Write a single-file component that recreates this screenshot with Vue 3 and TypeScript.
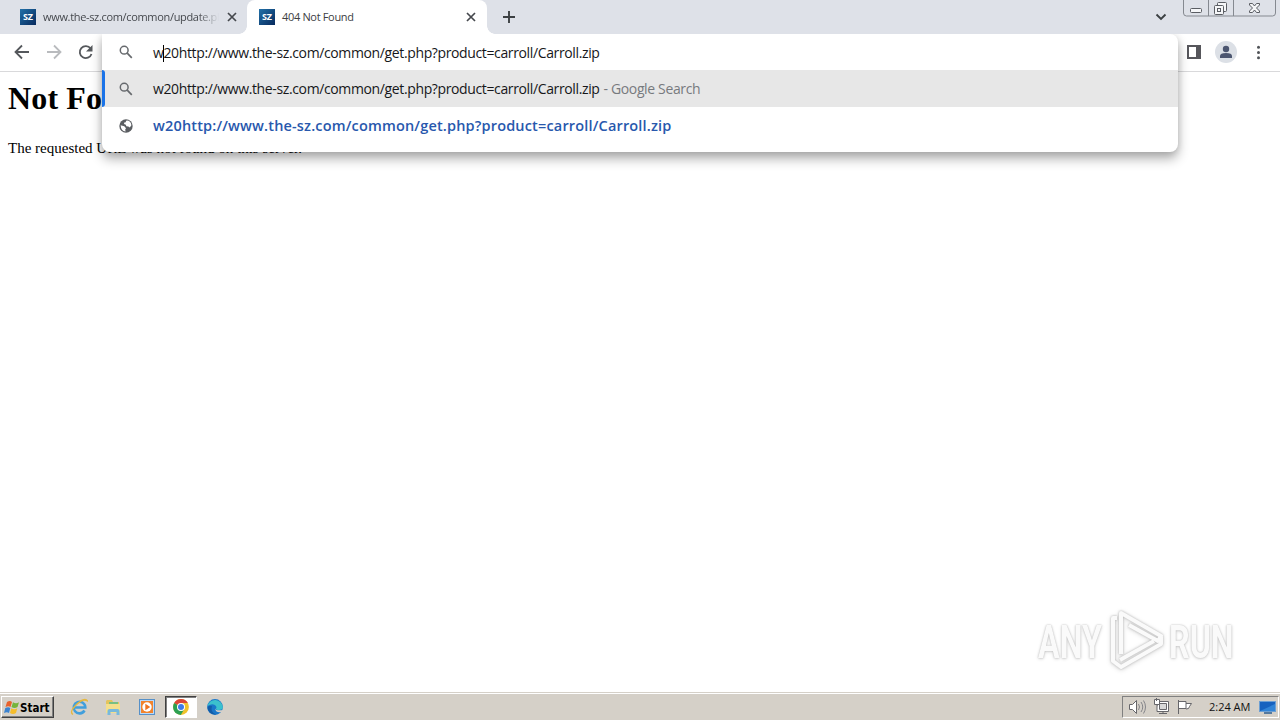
<script setup lang="ts">
const query: string = 'w20http://www.the-sz.com/common/get.php?product=carroll/Carroll.zip'
</script>

<template>
  <div class="screen">
    <header class="tabs">
      <div class="tab idle">
        <span class="fav">SZ</span>
        <span class="title fade">www.the-sz.com/common/update.ph</span>
        <svg class="close" width="10" height="10" viewBox="0 0 10 10"><path d="M1 1l8 8M9 1L1 9" stroke="#45484d" stroke-width="1.7" /></svg>
      </div>
      <div class="tab active">
        <span class="fav">SZ</span>
        <span class="title">404 Not Found</span>
        <svg class="close" width="10" height="10" viewBox="0 0 10 10"><path d="M1 1l8 8M9 1L1 9" stroke="#45484d" stroke-width="1.7" /></svg>
      </div>
      <svg class="plus" width="12" height="12" viewBox="0 0 12 12"><path d="M6 0v12M0 6h12" stroke="#3c4043" stroke-width="1.9" /></svg>
      <svg class="chev" width="12" height="8" viewBox="0 0 12 8"><path d="M1.5 1.5L6 6l4.5-4.500" fill="none" stroke="#3c4043" stroke-width="1.9" /></svg>
      <svg class="winctl" width="94" height="18" viewBox="0 0 94 18">
        <path d="M.5 0v13q0 3 3 3h86q3 0 3-3V0M25.500 0v16M50.500 0v16" fill="none" stroke="#858990" />
        <g fill="#f5f6f8" stroke="#5a5d63">
          <rect x="7.500" y="8.500" width="11" height="4" rx="1" />
          <rect x="34.500" y="2.500" width="9" height="9" rx="1" />
          <rect x="31.500" y="5.500" width="9" height="9" rx="1" />
          <rect x="34.500" y="8.500" width="3" height="3" />
          <path d="M66.500 3.500h3l2 2.500 2-2.500h3v1.500l-3 3 3 3v1.500h-3l-2-2.500-2 2.500h-3v-1.500l3-3-3-3z" />
        </g>
      </svg>
    </header>

    <div class="toolbar">
      <svg class="nav" width="100" height="37" viewBox="0 0 100 37" fill="none" stroke-width="1.8">
        <path d="M29 18H16M22 11.500L15.500 18l6.500 6.500" stroke="#55585c" />
        <path d="M47 18h13M54 11.500l6.500 6.500-6.500 6.500" stroke="#b9bbbe" />
        <path d="M90.600 14.500A6 6 0 1 0 91.500 20" stroke="#55585c" />
        <path d="M92.500 11v6.500H86z" fill="#55585c" />
      </svg>
      <svg class="actions" width="100" height="37" viewBox="0 0 100 37">
        <path d="M7 11h14v14H7zM9 13v10h7V13z" fill="#56565b" fill-rule="evenodd" />
        <circle cx="46" cy="18" r="11" fill="#dce0e6" />
        <circle cx="46" cy="15" r="3.200" fill="#4c5670" />
        <path d="M40 24v-2q0-3 6-3t6 3v2z" fill="#4c5670" />
        <g fill="#505357"><circle cx="78.500" cy="13.300" r="1.500" /><circle cx="78.500" cy="18.500" r="1.500" /><circle cx="78.500" cy="23.700" r="1.500" /></g>
      </svg>
    </div>

    <main class="page">
      <h1>Not Found</h1>
      <p>The requested URL was not found on this server.</p>
    </main>

    <section class="omnibox">
      <div class="row input">
        <svg class="ico" width="14" height="14" viewBox="0 0 14 14"><circle cx="5.200" cy="5.200" r="3.900" fill="none" stroke="#66696d" stroke-width="1.500" /><path d="M8.200 8.200l4.600 4.600" stroke="#66696d" stroke-width="1.700" /></svg>
        <span class="url">{{ query }}</span>
        <i class="caret"></i>
      </div>
      <div class="row selected">
        <svg class="ico" width="14" height="14" viewBox="0 0 14 14"><circle cx="5.200" cy="5.200" r="3.900" fill="none" stroke="#66696d" stroke-width="1.500" /><path d="M8.200 8.200l4.600 4.600" stroke="#66696d" stroke-width="1.700" /></svg>
        <span class="url">{{ query }}</span><span class="hint">- Google Search</span>
      </div>
      <div class="row">
        <svg class="ico" width="14" height="14" viewBox="0 0 14 14"><circle cx="7" cy="7" r="6.700" fill="#5b5e62" /><path d="M1.600 6.200l3.700 1 1.700 2-.8 1.200.4 2Q2 12 1.600 6.200zM7 1.700l2-.1q3 1 3.400 4.600l-1.600 2.300-1.500-1-2-.3-.4-1.500L5 5l.3-1.500 1.500-.3z" fill="#fff" /></svg>
        <span class="match">{{ query }}</span>
      </div>
    </section>

    <div class="watermark">
      <span class="wm any">ANY</span>
      <svg class="play" width="60" height="64" viewBox="0 0 60 64" fill="none" stroke="#fafafa" stroke-width="4" stroke-linejoin="round">
        <path d="M15 46V5l40 23-3 5-29-16" />
        <path d="M11 10H7v43l8 6 40-23v-7" />
        <path d="M14 52l7-4 27-15" />
      </svg>
      <span class="wm run">RUN</span>
    </div>

    <footer class="taskbar">
      <div class="start">
        <svg width="16" height="15" viewBox="0 0 16 15">
          <path d="M3 2q3-2 5 0L6.500 7q-2-1.500-5 0z" fill="#e8622c" />
          <path d="M9 2.300q3 1.700 6 0L13.500 7q-3 1.800-6 0z" fill="#76b43c" />
          <path d="M1.300 8q3-1.500 5 0L5 13q-2-1.500-5 0z" fill="#3b83d0" />
          <path d="M7.300 8.300q3 1.700 6 0L12 13q-3 1.800-6 0z" fill="#f5bd2c" />
        </svg>
        <b>Start</b>
      </div>
      <div class="app">
        <svg width="18" height="18" viewBox="0 0 18 18"><path d="M14.500 12.500A5.800 5.800 0 1 1 15.300 9.500H5" fill="none" stroke="#419fdc" stroke-width="2.600" /><path d="M3 16.500Q-1 14 6 7T17.500 3Q16 0 10 3" fill="none" stroke="#e6b83f" stroke-width="1.300" /></svg>
      </div>
      <div class="app">
        <svg width="18" height="18" viewBox="0 0 18 18"><path d="M2 3l1-1h5l1 2h6v11H2z" fill="#e4c45d" /><path d="M5 4h9v3H5z" fill="#78bf82" /><path d="M2 6h14v9H2z" fill="#f4df8c" /><path d="M3.500 17v-4q0-2 2-2h8q2 0 2 2v4h-3v-3h-6v3z" fill="#78b9dc" /></svg>
      </div>
      <div class="app">
        <svg width="18" height="18" viewBox="0 0 18 18"><rect x="1.500" y="1.500" width="15" height="15" fill="#b9dafa" stroke="#5690c8" /><rect x="3" y="3" width="12" height="12" fill="#f1832c" /><circle cx="9" cy="9" r="4.700" fill="#fff" /><path d="M7.300 5.800l5 3.200-5 3.200z" fill="#ee7420" /></svg>
      </div>
      <div class="app pressed">
        <svg width="18" height="18" viewBox="0 0 18 18"><circle cx="9" cy="9" r="7.900" fill="#f0c22b" /><path d="M9 9L2.100 5.100A7.900 7.900 0 0 1 15.900 5.100H9z" fill="#dc4638" /><path d="M9 9L2.100 5.100A7.900 7.900 0 0 0 8.800 16.900L12.300 11z" fill="#2ca052" /><circle cx="9" cy="9" r="4" fill="#fff" /><circle cx="9" cy="9" r="3" fill="#3f7be8" /></svg>
      </div>
      <div class="app">
        <svg width="18" height="18" viewBox="0 0 18 18"><circle cx="9" cy="9" r="7.900" fill="#1976c9" /><path d="M1.400 8A7.900 7.900 0 0 1 16.900 9q0 3-3.900 3-3 0-3-1.500 1-1 0-2.500Q7 4.500 1.400 8z" fill="#3bc0cd" /><path d="M6 8q-2 6 4 8.500-7 .5-8.500-6.500Q2 7 6 8z" fill="#125ca8" /><path d="M9.300 10.500q.5 2.700 8 1.500l-1.300 2q-7 1-6.700-3.500z" fill="#d5d0c8" /></svg>
      </div>
      <div class="tray">
        <svg width="76" height="20" viewBox="0 0 76 20" fill="#fff" stroke="#66666a">
          <path d="M6.500 7.500h3l4-4v13l-4-4h-3z" /><path d="M15.500 7q2 3 0 6M18 5q3.500 5 0 10M20.500 3.500q4 6.500 0 13" fill="none" stroke="#85858a" />
          <path d="M34.500 4.500h11v10h-11z" /><path d="M36.500 6.500h7v6h-7z" fill="#d8d8d8" /><path d="M36 16.500h8M40 14.500v2" /><path d="M31.500 2.500h5v5h-5zM33.500 1v3M34 7.500v7h3" />
          <path d="M55.500 3v14M56 4.500h7v7h-7M63 6.500h5.500l-2 3-1 2-2.500.5" />
        </svg>
        <time>2:24 AM</time>
        <svg class="desk" width="17" height="15" viewBox="0 0 17 15"><rect x=".5" y="1.500" width="16" height="10" fill="#1762bf" stroke="#6d9fd3" /><path d="M1 11L16 4v7z" fill="#3184d7" /><path d="M5 13h8" stroke="#55799e" stroke-width="2" /></svg>
      </div>
    </footer>
  </div>
</template>

<style>
body { margin: 0; overflow: hidden; }
</style>

<style scoped>
* { box-sizing: border-box; }
svg { display: block; flex: none; }
.screen { position: relative; width: 1280px; height: 720px; background: #fff; display: flex; flex-direction: column; overflow: hidden; font-family: "Open Sans", "Noto Sans", sans-serif; }
.tabs { height: 34px; background: #dee1e8; display: flex; flex: none; }
.tab { height: 34px; display: flex; align-items: center; position: relative; flex: none; }
.idle { width: 247px; padding-left: 20px; }
.active { width: 240px; padding-left: 12px; background: #fff; border-radius: 8px 8px 0 0; }
.active::before, .active::after { content: ""; position: absolute; bottom: 0; width: 8px; height: 8px; }
.active::before { left: -8px; background: radial-gradient(circle at 0 0, transparent 7.5px, #fff 8px); }
.active::after { right: -8px; background: radial-gradient(circle at 100% 0, transparent 7.5px, #fff 8px); }
.fav { width: 16px; height: 16px; background: linear-gradient(135deg, #2271a8, #07295d); color: #fff; font: bold 9px/16px "Open Sans", sans-serif; text-align: center; flex: none; }
.title { margin-left: 7px; width: 176px; font-size: 11px; line-height: 16px; color: #45484d; white-space: nowrap; letter-spacing: -.33px; }
.fade { letter-spacing: -.33px; mask-image: linear-gradient(90deg, #000 155px, transparent 176px); }
.active .title { width: 180px; color: #3c4043; }
.close { margin-left: 8px; }
.active .close { margin-left: 4px; }
.plus { margin: 11px 0 0 16px; }
.chev { margin: 13px 0 0 auto; }
.winctl { margin: 0 3px 0 16px; }
.toolbar { height: 38px; flex: none; display: flex; justify-content: space-between; border-bottom: 1px solid #d9d9db; }
.page { flex: 1; padding: 0 8px; font-family: "Liberation Serif", serif; color: #000; }
h1 { margin: 8px 0 0; font-size: 32px; line-height: 36px; letter-spacing: .15px; }
p { margin: 23px 0 0; font-size: 15px; line-height: 18px; letter-spacing: 0; }
.omnibox { position: absolute; left: 102px; top: 34px; width: 1076px; height: 118px; background: #fff; border-radius: 0 8px 8px 8px; box-shadow: 0 7px 12px rgba(0,0,0,.3), 0 1px 7px rgba(0,0,0,.12); clip-path: inset(0 -20px -30px -20px); }
.row { height: 37px; display: flex; align-items: center; padding-left: 17px; position: relative; white-space: nowrap; font-size: 14px; line-height: 20px; }
.input { height: 36px; }
.input .url { padding-top: 2px; }
.selected { background: #e7e7e7; }
.selected::before { content: ""; position: absolute; left: 0; top: 0; width: 3px; height: 37px; background: #1a73e8; border-radius: 0 3px 3px 0; }
.url, .match { margin-left: 20px; color: #16171a; }
.url { letter-spacing: -.37px; }
.match { color: #2858ad; font-size: 14.5px; font-weight: 600; letter-spacing: .17px; }
.hint { margin-left: 4px; color: #777a7e; letter-spacing: -.36px; }
.caret { position: absolute; left: 61px; top: 11px; width: 1px; height: 17px; background: #000; }
.watermark { position: absolute; left: 1038px; top: 608px; display: flex; align-items: center; width: 196px; height: 64px; }
.play { filter: drop-shadow(0 0 1px #b5b5b5) drop-shadow(0 1px 2px #ddd); }
.wm { display: block; font: 700 46px/60px Roboto, sans-serif; color: #fafafa; text-shadow: 0 0 2px #b5b5b5, 0 1px 4px #d5d5d5; transform-origin: left center; transform: scaleX(.7); white-space: nowrap; padding-top: 3px; }
.any { width: 68px; }
.run { width: 64px; margin-left: 3px; }
.taskbar { height: 28px; flex: none; background: #d5d0c8; border-top: 1px solid #d5d0c8; box-shadow: inset 0 1px #fff; display: flex; align-items: center; padding: 1px 1px 0; }
.start { width: 53px; height: 22px; padding: 1px 0 0 2px; border: 1px solid; border-color: #fff #404040 #404040 #fff; box-shadow: inset -1px -1px #808080; display: flex; align-items: center; margin-right: 9px; }
.start b { font: bold 11.5px/18px "DejaVu Sans Condensed", sans-serif; color: #000; }
.app { width: 32px; height: 22px; display: flex; align-items: center; justify-content: center; margin-right: 2px; flex: none; }
.pressed { background: #fff; border: 1px solid; border-color: #404040 #fff #fff #404040; box-shadow: inset 1px 1px #808080; }
.tray { margin-left: auto; width: 157px; height: 22px; border: 1px solid; border-color: #808080 #fff #fff #808080; display: flex; align-items: center; }
.tray time { margin-left: 10px; width: 43px; font-size: 11px; line-height: 18px; color: #111; white-space: nowrap; }
.desk { margin-left: 7px; }
</style>
